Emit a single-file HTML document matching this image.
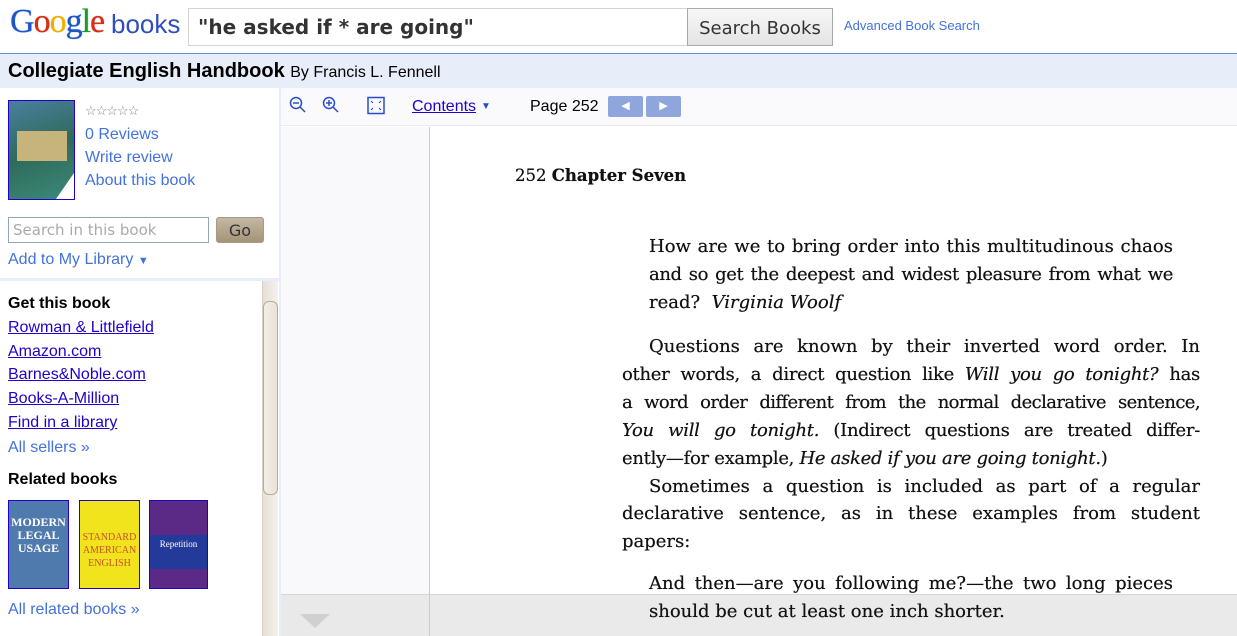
<!DOCTYPE html>
<html><head><meta charset="utf-8"><style>
*{margin:0;padding:0;box-sizing:border-box}
body{width:1237px;height:636px;overflow:hidden;position:relative;background:#fff;font-family:"Liberation Sans",Arial,sans-serif}
.a{position:absolute;white-space:nowrap}
.lk{color:#4272db;font-size:16px}
.ul{color:#2200cc;text-decoration:underline;font-size:16px}
.pg{position:absolute;font-family:"DejaVu Serif",serif;font-size:18px;color:#111;white-space:nowrap;line-height:28px;height:28px;text-shadow:0 0 0.5px #222}
.j{text-align:justify;text-align-last:justify;white-space:normal}
.bk{position:absolute;border:1px solid #2200cc}
</style></head><body>
<!-- header -->
<div class="a" style="left:10px;top:3px;font-family:'Liberation Serif',serif;font-size:34px;letter-spacing:-1px;text-shadow:0 0 0.8px currentColor"><span style="color:#1e56c8">G</span><span style="color:#d62c1a">o</span><span style="color:#efb000">o</span><span style="color:#1e56c8">g</span><span style="color:#199a2a">l</span><span style="color:#d62c1a">e</span></div>
<div class="a" style="left:111px;top:9px;font-size:26px;color:#2f4fbf">books</div>
<div class="a" style="left:188px;top:8px;width:500px;height:38px;border:1px solid #d4d4d4;border-right:none"></div>
<div class="a" style="left:198px;top:15px;font-family:'DejaVu Sans',sans-serif;font-weight:bold;font-size:20px;color:#333">"he asked if * are going"</div>
<div class="a" style="left:687px;top:8px;width:146px;height:38px;border:1px solid #aaa;background:linear-gradient(#f7f7f7,#e4e4e4);font-family:'DejaVu Sans',sans-serif;font-size:18px;color:#333;text-align:center;line-height:40px">Search Books</div>
<div class="a" style="left:844px;top:18px;font-size:13px;color:#4272db">Advanced Book Search</div>
<div class="a" style="left:0;top:53px;width:1237px;height:35px;background:#e8eef9;border-top:1px solid #6b90da"></div>
<div class="a" style="left:8px;top:60px;font-size:20px;font-weight:bold;color:#000">Collegiate English Handbook <span style="font-weight:normal;font-size:16px">By Francis L. Fennell</span></div>
<!-- left panel -->
<div class="a" style="left:279px;top:88px;width:2px;height:548px;background:#e8eef9"></div>
<div class="bk" style="left:8px;top:100px;width:67px;height:100px;background:linear-gradient(160deg,#4a7fa0,#2f6a5a 50%,#3c8a7a);"><div style="position:absolute;left:8px;top:30px;width:50px;height:30px;background:#c7b47a"></div><div style="position:absolute;right:0;bottom:0;width:0;height:0;border-left:18px solid transparent;border-bottom:26px solid #fff"></div></div>
<div class="a" style="left:85px;top:103px;font-size:13px;color:#888;letter-spacing:-1px">☆☆☆☆☆</div>
<div class="a lk" style="left:85px;top:126px">0 Reviews</div>
<div class="a lk" style="left:85px;top:149px">Write review</div>
<div class="a lk" style="left:85px;top:172px">About this book</div>
<div class="a" style="left:8px;top:217px;width:201px;height:26px;border:1px solid #8fa8c0;font-family:'DejaVu Sans',sans-serif;font-size:15px;color:#aaa;padding:3px 4px">Search in this book</div>
<div class="a" style="left:216px;top:217px;width:48px;height:26px;border:1px solid #a89a84;border-radius:3px;background:linear-gradient(#c4b8a4,#a49478);font-family:'DejaVu Sans',sans-serif;font-size:16px;color:#333;text-align:center;line-height:25px">Go</div>
<div class="a lk" style="left:8px;top:251px">Add to My Library <span style="font-size:11px">▼</span></div>
<div class="a" style="left:0;top:278px;width:279px;height:3px;background:#e8eef9"></div>
<div class="a" style="left:8px;top:295px;font-size:16px;font-weight:bold">Get this book</div>
<div class="a ul" style="left:8px;top:319px">Rowman &amp; Littlefield</div>
<div class="a ul" style="left:8px;top:343px">Amazon.com</div>
<div class="a ul" style="left:8px;top:366px">Barnes&amp;Noble.com</div>
<div class="a ul" style="left:8px;top:390px">Books-A-Million</div>
<div class="a ul" style="left:8px;top:414px">Find in a library</div>
<div class="a lk" style="left:8px;top:439px">All sellers »</div>
<div class="a" style="left:8px;top:471px;font-size:16px;font-weight:bold">Related books</div>
<div class="bk" style="left:8px;top:500px;width:61px;height:89px;background:#4f7aae;color:#fff;font-family:'Liberation Serif',serif;font-size:12px;font-weight:bold;text-align:center;line-height:13px;padding-top:15px">MODERN<br>LEGAL<br>USAGE</div>
<div class="bk" style="left:79px;top:500px;width:61px;height:89px;background:#f2e41c;color:#c8502a;font-family:'Liberation Serif',serif;font-size:10px;text-align:center;line-height:13px;padding-top:30px">STANDARD<br>AMERICAN<br>ENGLISH</div>
<div class="bk" style="left:149px;top:500px;width:59px;height:89px;background:#5a2a86;color:#fff;font-family:'Liberation Serif',serif;font-size:9px;text-align:center;padding-top:34px"><div style="background:#243a9a;height:34px;padding-top:4px">Repetition</div></div>
<div class="a lk" style="left:8px;top:601px">All related books »</div>
<!-- scrollbar -->
<div class="a" style="left:262px;top:281px;width:16px;height:355px;background:linear-gradient(90deg,#e6e0d6,#f4f1ec);border-left:1px solid #d8d0c2"></div>
<div class="a" style="left:263px;top:301px;width:15px;height:194px;border:1px solid #b8ab94;border-radius:6px;background:linear-gradient(90deg,#f3efe8,#e8e2d8)"></div>
<!-- toolbar -->
<div class="a" style="left:281px;top:88px;width:956px;height:38px;background:#fafafd;border-bottom:1px solid #e8eaf2"></div>
<svg class="a" style="left:289px;top:96px" width="100" height="20" viewBox="0 0 100 20"><g fill="none" stroke="#2a4cc8" stroke-width="1.5"><circle cx="7" cy="7" r="5.5"/><path d="M4 7h6M11 11l5 5"/><circle cx="40" cy="7" r="5.5"/><path d="M37 7h6M40 4v6M44 11l5 5"/><rect x="79" y="1.5" width="16" height="16"/><path d="M82 5l2 2M92 5l-2 2M82 14l2-2M92 14l-2-2" stroke-width="1"/></g></svg>
<div class="a ul" style="left:412px;top:98px">Contents</div>
<div class="a" style="left:481px;top:101px;font-size:10px;color:#2a4cc8">▼</div>
<div class="a" style="left:530px;top:98px;font-size:16px;color:#000">Page 252</div>
<div class="a" style="left:608px;top:96px;width:35px;height:21px;background:#8ea6dc;border-radius:2px;color:#fff;font-size:11px;text-align:center;line-height:21px">◀</div>
<div class="a" style="left:646px;top:96px;width:35px;height:21px;background:#8ea6dc;border-radius:2px;color:#fff;font-size:11px;text-align:center;line-height:21px">▶</div>
<!-- page area -->
<div class="a" style="left:281px;top:127px;width:148px;height:509px;background:#f9f9fc"></div>
<div class="a" style="left:429px;top:127px;width:1px;height:509px;background:#ccc"></div>
<div class="pg" style="left:515px;top:162px;font-size:16.5px">252 <b>Chapter Seven</b></div>
<div class="pg j" style="left:649px;top:233px;width:524px">How are we to bring order into this multitudinous chaos</div>
<div class="pg j" style="left:649px;top:261px;width:524px;letter-spacing:-0.4px">and so get the deepest and widest pleasure from what we</div>
<div class="pg" style="left:649px;top:289px">read?&nbsp; <i>Virginia Woolf</i></div>
<div class="pg j" style="left:649px;top:333px;width:551px">Questions are known by their inverted word order. In</div>
<div class="pg j" style="left:622px;top:361px;width:578px;letter-spacing:-0.3px">other words, a direct question like <i>Will you go tonight?</i> has</div>
<div class="pg j" style="left:622px;top:389px;width:578px;letter-spacing:-0.6px">a word order different from the normal declarative sentence,</div>
<div class="pg j" style="left:622px;top:417px;width:578px;letter-spacing:-0.3px"><i>You will go tonight.</i> (Indirect questions are treated differ-</div>
<div class="pg" style="left:622px;top:445px;letter-spacing:-0.3px">ently—for example, <i>He asked if you are going tonight.</i>)</div>
<div class="pg j" style="left:649px;top:473px;width:551px">Sometimes a question is included as part of a regular</div>
<div class="pg j" style="left:622px;top:500px;width:578px">declarative sentence, as in these examples from student</div>
<div class="pg" style="left:622px;top:528px">papers:</div>
<div class="pg j" style="left:649px;top:570px;width:524px">And then—are you following me?—the two long pieces</div>
<div class="a" style="left:281px;top:594px;width:956px;height:42px;background:rgba(230,230,230,0.85);border-top:1px solid #d6d6d6"></div>
<div class="pg" style="left:649px;top:598px">should be cut at least one inch shorter.</div>
<div class="a" style="left:429px;top:594px;width:1px;height:42px;background:#ccc"></div>
<div class="a" style="left:300px;top:614px;width:0;height:0;border-left:15px solid transparent;border-right:15px solid transparent;border-top:14px solid #d0d0d0"></div>
</body></html>
